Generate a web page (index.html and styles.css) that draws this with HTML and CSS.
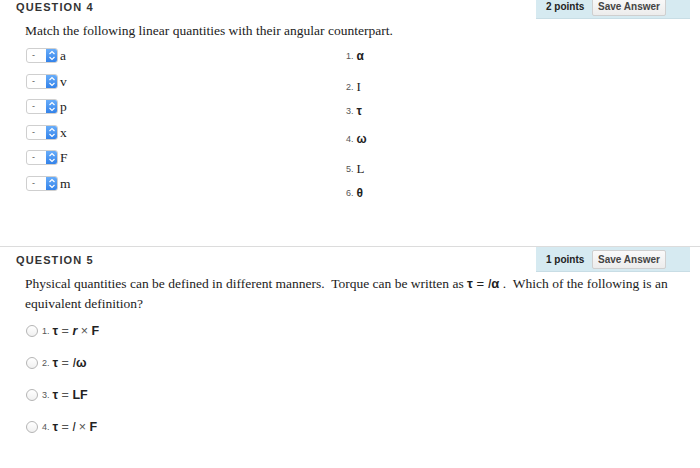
FILE: index.html
```html
<!DOCTYPE html>
<html>
<head>
<meta charset="utf-8">
<link rel="stylesheet" href="styles.css">
</head>
<body>
<section class="question q4">
  <div class="q-header">
    <h2 class="q-title">QUESTION 4</h2>
    <div class="points-box">
      <span class="points">2 points</span>
      <button class="save">Save Answer</button>
    </div>
  </div>
  <p class="prompt">Match the following linear quantities with their angular counterpart.</p>
  <div class="match">
    <ul class="left-col">
      <li><span class="sel"><span class="sel-val">-</span><span class="sel-btn"><svg viewBox="0 0 12 15" width="12" height="15"><path d="M3.5 6 L6 3.5 L8.5 6 M3.5 9 L6 11.5 L8.5 9" fill="none" stroke="#fff" stroke-width="1.2"/></svg></span></span><span class="term">a</span></li>
      <li><span class="sel"><span class="sel-val">-</span><span class="sel-btn"><svg viewBox="0 0 12 15" width="12" height="15"><path d="M3.5 6 L6 3.5 L8.5 6 M3.5 9 L6 11.5 L8.5 9" fill="none" stroke="#fff" stroke-width="1.2"/></svg></span></span><span class="term">v</span></li>
      <li><span class="sel"><span class="sel-val">-</span><span class="sel-btn"><svg viewBox="0 0 12 15" width="12" height="15"><path d="M3.5 6 L6 3.5 L8.5 6 M3.5 9 L6 11.5 L8.5 9" fill="none" stroke="#fff" stroke-width="1.2"/></svg></span></span><span class="term">p</span></li>
      <li><span class="sel"><span class="sel-val">-</span><span class="sel-btn"><svg viewBox="0 0 12 15" width="12" height="15"><path d="M3.5 6 L6 3.5 L8.5 6 M3.5 9 L6 11.5 L8.5 9" fill="none" stroke="#fff" stroke-width="1.2"/></svg></span></span><span class="term">x</span></li>
      <li><span class="sel"><span class="sel-val">-</span><span class="sel-btn"><svg viewBox="0 0 12 15" width="12" height="15"><path d="M3.5 6 L6 3.5 L8.5 6 M3.5 9 L6 11.5 L8.5 9" fill="none" stroke="#fff" stroke-width="1.2"/></svg></span></span><span class="term">F</span></li>
      <li><span class="sel"><span class="sel-val">-</span><span class="sel-btn"><svg viewBox="0 0 12 15" width="12" height="15"><path d="M3.5 6 L6 3.5 L8.5 6 M3.5 9 L6 11.5 L8.5 9" fill="none" stroke="#fff" stroke-width="1.2"/></svg></span></span><span class="term">m</span></li>
    </ul>
    <ol class="right-col">
      <li class="r1"><span class="num">1.</span> <span class="sym">α</span></li>
      <li class="r2"><span class="num">2.</span> <span class="sym-serif">I</span></li>
      <li class="r3"><span class="num">3.</span> <span class="sym">τ</span></li>
      <li class="r4"><span class="num">4.</span> <span class="sym">ω</span></li>
      <li class="r5"><span class="num">5.</span> <span class="sym-serif">L</span></li>
      <li class="r6"><span class="num">6.</span> <span class="sym">θ</span></li>
    </ol>
  </div>
</section>
<section class="question q5">
  <div class="q-header">
    <h2 class="q-title">QUESTION 5</h2>
    <div class="points-box">
      <span class="points">1 points</span>
      <button class="save">Save Answer</button>
    </div>
  </div>
  <p class="prompt">Physical quantities can be defined in different manners.&nbsp; Torque can be written as <span class="m"><b>τ</b> = <i>I</i><b>α</b></span> .&nbsp; Which of the following is an equivalent definition?</p>
  <ul class="options">
    <li><span class="radio"></span><span class="num">1.</span> <span class="m"><b>τ</b> <span class="op">=</span> <b><i>r</i></b> <span class="op">×</span> <b>F</b></span></li>
    <li><span class="radio"></span><span class="num">2.</span> <span class="m"><b>τ</b> <span class="op">=</span> <i>I</i><b>ω</b></span></li>
    <li><span class="radio"></span><span class="num">3.</span> <span class="m"><b>τ</b> <span class="op">=</span> <b>LF</b></span></li>
    <li><span class="radio"></span><span class="num">4.</span> <span class="m"><b>τ</b> <span class="op">=</span> <i>l</i> <span class="op">×</span> <b>F</b></span></li>
  </ul>
</section>
</body>
</html>
```
FILE: styles.css
```css
html, body { margin: 0; padding: 0; background: #fff; }
body { width: 700px; height: 468px; overflow: hidden; color: #222; font-family: "Liberation Serif", serif; }
ul, ol { list-style: none; margin: 0; padding: 0; }

.question { display: flex; flex-direction: column; }
.q4 { margin-top: -6px; }
.q5 { border-top: 1px solid #dcdcdc; }

.q-header { display: flex; justify-content: space-between; align-items: center; height: 25px; }
.q-title { margin: 0 0 0 16px; font: bold 11px "Liberation Sans", sans-serif; letter-spacing: 1.1px; color: #333; }
.points-box { display: flex; align-items: center; height: 25px; width: 154px; box-sizing: border-box; margin-right: 10px; padding-left: 10px; background: #d6eaf1; border-bottom: 1px solid #c8dde5; }
.points { font: bold 10px "Liberation Sans", sans-serif; color: #222; width: 46px; }
.save { height: 19px; width: 74px; padding: 0; font: bold 10px "Liberation Sans", sans-serif; color: #444; background: linear-gradient(#fafafa, #ececec); border: 1px solid #cfcfcf; border-radius: 2px; }

.prompt { margin: 2px 0 0 25px; width: 650px; font-size: 13.5px; line-height: 20px; color: #222; }
.m { font-family: "Liberation Sans", sans-serif; font-size: 13px; }
.m b { font-weight: bold; }
.op { color: #555; }

.match { display: flex; margin-top: 7px; height: 198px; }
.left-col { display: flex; flex-direction: column; gap: 10.6px; margin-left: 26px; width: 320px; }
.left-col li { display: flex; align-items: center; height: 15px; }
.sel { display: flex; width: 32px; height: 15px; box-sizing: border-box; border: 1px solid #cfcfcf; border-radius: 3px; overflow: hidden; background: #fff; }
.sel-val { flex: 1; font: 9px "Liberation Sans", sans-serif; color: #555; line-height: 13px; padding-left: 5px; }
.sel-btn { width: 12px; height: 15px; margin-top: -1px; margin-right: -1px; background: linear-gradient(#6cb0fb, #2f7fe8); border-radius: 0 3px 3px 0; }
.sel-btn svg { display: block; }
.term { margin-left: 2px; font-size: 13.5px; line-height: 15px; }

.right-col { display: flex; flex-direction: column; }
.right-col li { height: 16px; line-height: 16px; display: flex; align-items: center; }
.num { font: 9px "Liberation Sans", sans-serif; color: #555; }
.right-col .num { margin-right: 3px; }
.sym { font: bold 12px "Liberation Sans", sans-serif; }
.sym-serif { font-size: 13px; }
.r1 { margin-top: 0; }
.r2 { margin-top: 15px; }
.r3 { margin-top: 8px; }
.r4 { margin-top: 12px; }
.r5 { margin-top: 14px; }
.r6 { margin-top: 8px; }

.options { margin: 11px 0 0 26px; display: flex; flex-direction: column; gap: 20px; }
.options li { display: flex; align-items: center; height: 12px; font-size: 12px; }
.radio { width: 12px; height: 12px; box-sizing: border-box; border: 1px solid #b5b5b5; border-radius: 50%; background: linear-gradient(#fff, #f0f0f0); margin-right: 4px; }
.options .num { margin-right: 3px; }
.options .m { font-size: 12.5px; white-space: pre; }
```
